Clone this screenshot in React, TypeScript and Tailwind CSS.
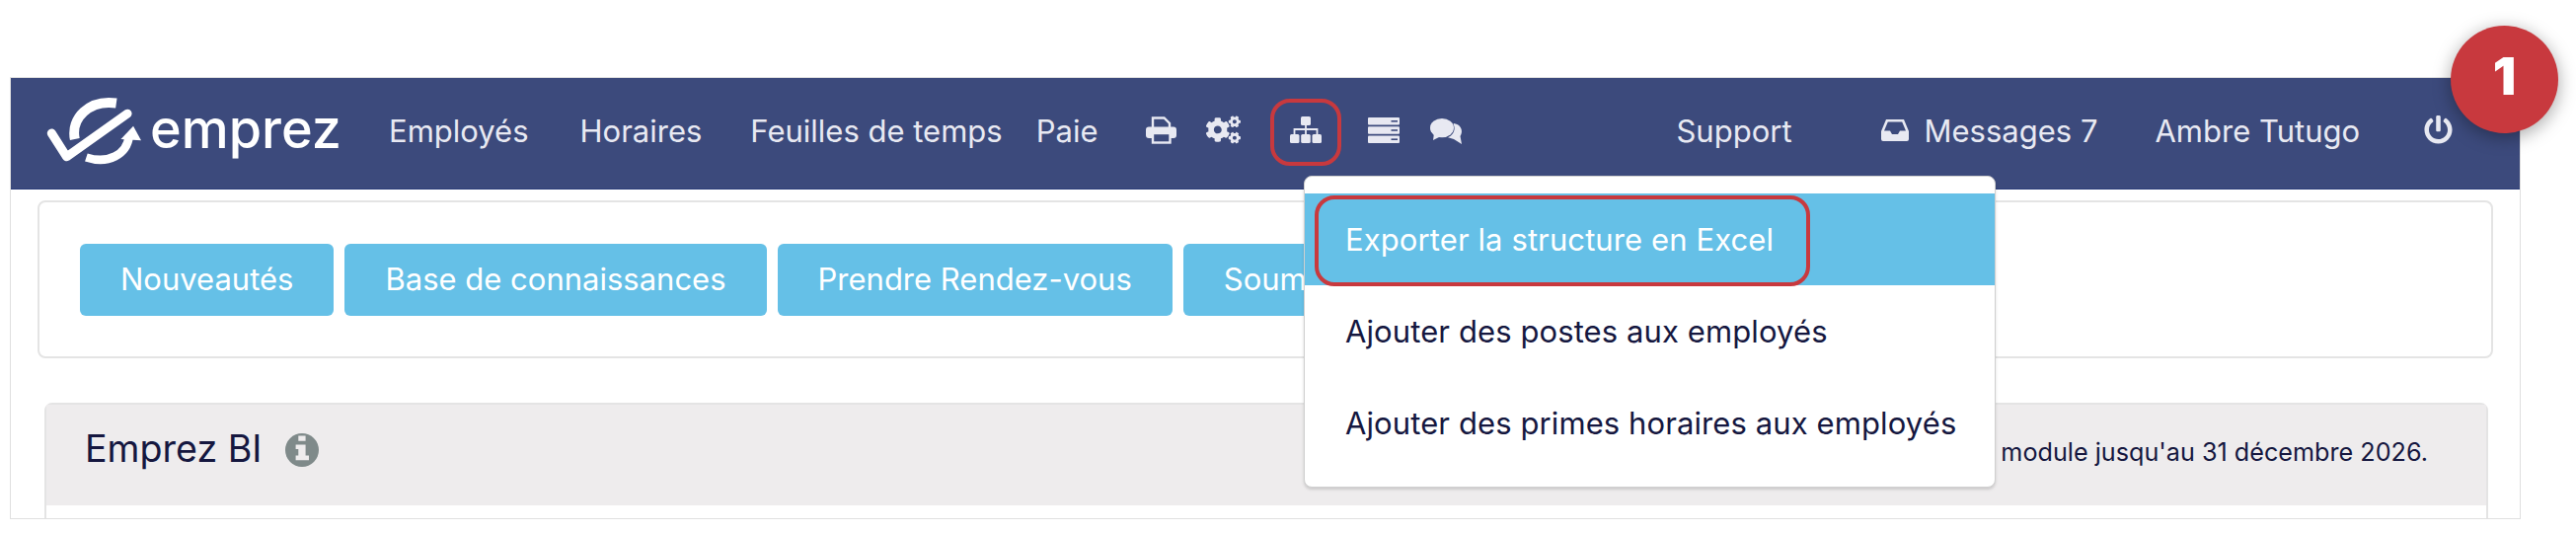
import React from 'react'
import { FaCogs, FaPowerOff } from 'react-icons/fa'

const buttons = ['Nouveautés', 'Base de connaissances', 'Prendre Rendez-vous', 'Soumettre']

function Logo() {
    return (
        <div className="flex items-center w-[298px] h-[69px] mb-[5px]">
            <svg viewBox="50 40 290 205" className="w-[96px] h-[69px] shrink-0" fill="none">
                <path d="M66 150 L112 222 L298 90" stroke="white" strokeWidth="27" strokeLinecap="round" strokeLinejoin="round" />
                <path d="M137 168 C124 105 180 46 264 58" stroke="white" strokeWidth="30" />
                <path d="M172 224 C240 246 296 215 303 160" stroke="white" strokeWidth="26" />
                <path d="M278 168 L316 128 L340 172 Z" fill="white" />
            </svg>
            <span className="ml-[9px] text-[54px] leading-none font-medium text-white mt-[-4px]">emprez</span>
        </div>
    )
}

function PrintIcon() {
    return (
        <svg viewBox="0 0 31 28" className="ml-[49px] mb-[7px] w-[31px] h-[28px]" fill="none">
            <path d="M7 12V1.5H18.5L24 7V12" stroke="#e8e9f2" strokeWidth="2.4" />
            <rect x="0" y="10.5" width="31" height="11.5" rx="3" fill="#e8e9f2" />
            <rect x="7" y="17" width="17.5" height="9.5" fill="#3c4a7c" stroke="#e8e9f2" strokeWidth="2.4" />
        </svg>
    )
}

function SitemapIcon() {
    return (
        <svg viewBox="0 0 32 27" className="w-[32px] h-[27px] mb-[5px]" fill="#e8e9f2">
            <rect x="11" y="0" width="10" height="9" rx="1.5" />
            <path d="M16 9V18M4.5 18V13H27.5V18" stroke="#e8e9f2" strokeWidth="1.8" fill="none" />
            <rect x="0" y="18" width="9.5" height="9" rx="1.5" />
            <rect x="11.2" y="18" width="9.6" height="9" rx="1.5" />
            <rect x="22.5" y="18" width="9.5" height="9" rx="1.5" />
        </svg>
    )
}

function ServerIcon() {
    return (
        <svg viewBox="0 0 32 26" className="ml-[27px] mb-[7px] w-[32px] h-[26px]">
            {[0, 9.2, 18.4].map((y) => (
                <g key={y}>
                    <rect x="0" y={y} width="32" height="7.6" rx="1" fill="#e8e9f2" />
                    <rect x="23.5" y={y + 3} width="6.5" height="1.6" fill="#3c4a7c" />
                </g>
            ))}
        </svg>
    )
}

function CommentsIcon() {
    return (
        <svg viewBox="0 0 33 26" className="ml-[31px] mb-[4px] w-[33px] h-[26px]">
            <path d="M24 21 L32 26 L30.5 18 C34 12 31 6 24 5 L14 18 Z" fill="#e8e9f2" />
            <ellipse cx="12" cy="10" rx="12.6" ry="10.6" fill="#3c4a7c" />
            <ellipse cx="12" cy="9.6" rx="12" ry="9.6" fill="#e8e9f2" />
            <path d="M4 15 L3 22 L11 18 Z" fill="#e8e9f2" />
        </svg>
    )
}

function InboxIcon() {
    return (
        <svg viewBox="0 0 28 22" className="ml-[90px] mb-[6px] w-[28px] h-[22px]">
            <path
                fillRule="evenodd"
                fill="#e8e9f2"
                d="M5 0H23L28 12V20a2 2 0 0 1-2 2H2a2 2 0 0 1-2-2V12ZM6.8 2.6H21.2L25 11.5H19L17 15H11L9 11.5H3Z"
            />
        </svg>
    )
}

function InfoIcon() {
    return (
        <svg viewBox="0 0 34 34" className="ml-[24px] mb-[10px] w-[34px] h-[34px]">
            <circle cx="17" cy="17" r="17" fill="#7f8a8a" />
            <path fill="#eeeced" d="M13.3 2.5H20.6V7.8H13.3ZM10.6 11.6H20.6V22.6H24V27.3H10.6V22.6H13.3V16H10.6Z" />
        </svg>
    )
}

function App() {
    return (
        <div className="relative w-[2610px] h-[540px] bg-white overflow-hidden font-['Inter',sans-serif]">
            <div className="pt-[78px] pl-[10px]">
                <div className="relative w-[2544px] h-[448px] border border-[#e0e0e0] overflow-hidden">
                    <nav className="relative flex items-center h-[113px] pl-[36px] bg-[#3c4a7c] border-b border-[#2c3d7a] text-[#e8e9f2] text-[31px] leading-none">
                        <Logo />
                        <a className="ml-[49px] mb-[6px]">Employés</a>
                        <a className="ml-[52px] mb-[6px]">Horaires</a>
                        <a className="ml-[49px] mb-[6px]">Feuilles de temps</a>
                        <a className="ml-[34px] mb-[6px]">Paie</a>
                        <PrintIcon />
                        <FaCogs className="ml-[30px] mb-[7px] w-[35px] h-[31px]" />
                        <div className="ml-[30px] mb-[2px] w-[72px] h-[68px] flex items-center justify-center border-4 border-[#c8393e] rounded-[20px]">
                            <SitemapIcon />
                        </div>
                        <ServerIcon />
                        <CommentsIcon />
                        <a className="ml-[216px] mb-[6px]">Support</a>
                        <InboxIcon />
                        <a className="ml-[16px] mb-[6px]">Messages 7</a>
                        <a className="ml-[58px] mb-[6px]">Ambre Tutugo</a>
                        <FaPowerOff className="ml-[65px] mb-[7px] w-[29px] h-[29px]" />
                    </nav>

                    <div className="mt-[11px] ml-[27px] w-[2488px] h-[160px] border-2 border-[#e4e4e4] rounded-[8px] pt-[42px] pl-[41px] flex gap-[11px]">
                        {buttons.map((label) => (
                            <a key={label} className="h-[73px] px-[41px] pb-[2px] flex items-center bg-[#65c0e7] rounded-[6px] text-white text-[31px] leading-none">
                                {label}
                            </a>
                        ))}
                    </div>

                    <div className="mt-[45px] ml-[34px] w-[2476px] h-[200px] border-2 border-[#e4e4e4] rounded-t-[8px]">
                        <div className="h-[102px] bg-[#eeeced] flex items-center pl-[39px] pr-[59px] text-[#15173f]">
                            <span className="text-[37.6px] leading-none mb-[12px]">Emprez BI</span>
                            <InfoIcon />
                            <span className="ml-auto text-[25.2px] leading-none mb-[4px]">module jusqu'au 31 décembre 2026.</span>
                        </div>
                    </div>

                    {/* menu ouvert sous l'icone */}
                    <div className="absolute left-[1310px] top-[99px] w-[701px] h-[316px] bg-white border border-[#d0d0d0] rounded-[8px] shadow-[0_2px_3px_rgba(0,0,0,0.15)] pt-[17px] text-[31px] leading-none tracking-[0.1px] text-[#15173f]">
                        <div className="relative h-[93px] flex items-center pl-[41px] bg-[#65c0e7] text-white">
                            Exporter la structure en Excel
                            <div className="absolute left-[10px] top-[2px] w-[502px] h-[92px] border-4 border-[#c8393e] rounded-[20px]" />
                        </div>
                        <div className="h-[93px] flex items-center pl-[41px]">Ajouter des postes aux employés</div>
                        <div className="h-[93px] flex items-center pl-[41px]">Ajouter des primes horaires aux employés</div>
                    </div>
                </div>
            </div>

            <div className="absolute left-[2483px] top-[26px] w-[109px] h-[109px] pb-[6px] rounded-full bg-[#c8393e] shadow-[0_4px_18px_rgba(0,0,0,0.35)] flex items-center justify-center text-white text-[52px] font-black leading-none">
                1
            </div>
        </div>
    )
}

export default App
